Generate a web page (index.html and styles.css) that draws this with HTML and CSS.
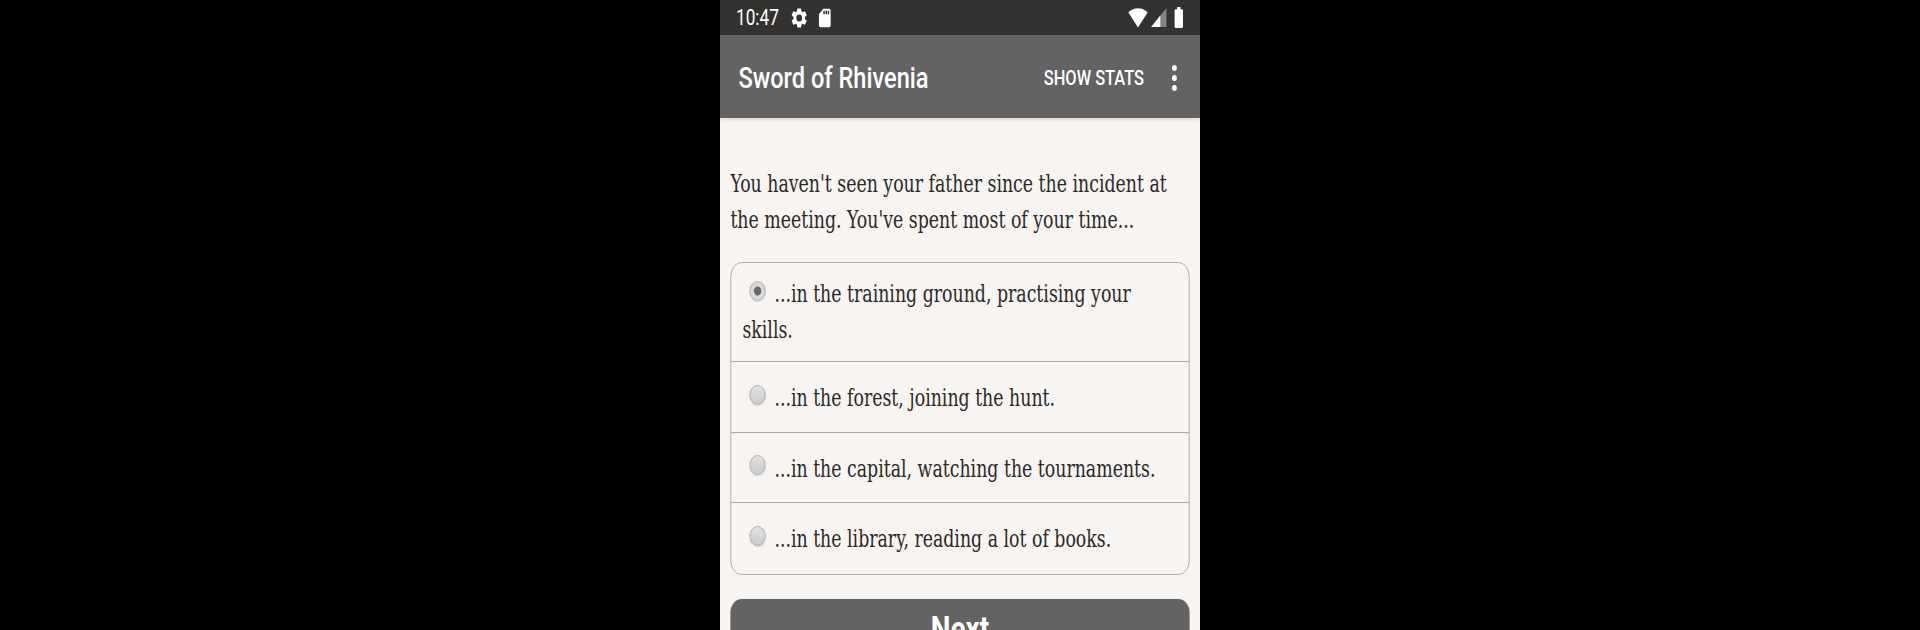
FILE: index.html
```html
<!DOCTYPE html>
<html lang="en">
<head>
  <meta charset="UTF-8">
  <title>Sword of Rhivenia</title>
  <link rel="stylesheet" href="styles.css">
</head>
<body>
  <div class="phone">
    <div class="status-bar">
      <span class="status-time">10:47</span>
      <svg class="status-icon gear" viewBox="0 0 24 24"><path d="M19.14 12.94c.04-.3.06-.61.06-.94s-.02-.64-.07-.94l2.03-1.58a.49.49 0 0 0 .12-.61l-1.92-3.32a.49.49 0 0 0-.59-.22l-2.39.96a7 7 0 0 0-1.62-.94l-.36-2.54a.48.48 0 0 0-.48-.41h-3.84a.47.47 0 0 0-.47.41l-.36 2.54c-.59.24-1.13.57-1.62.94l-2.39-.96a.48.48 0 0 0-.59.22L2.74 8.87a.48.48 0 0 0 .12.61l2.03 1.58c-.05.3-.09.63-.09.94s.02.64.07.94l-2.03 1.58a.49.49 0 0 0-.12.61l1.92 3.32c.12.22.37.29.59.22l2.39-.96c.5.38 1.03.7 1.62.94l.36 2.54c.05.24.24.41.48.41h3.84c.24 0 .44-.17.47-.41l.36-2.54a7 7 0 0 0 1.62-.94l2.39.96c.22.08.47 0 .59-.22l1.92-3.32a.48.48 0 0 0-.12-.61l-2.01-1.58zM12 15.6a3.6 3.6 0 1 1 0-7.2 3.6 3.6 0 0 1 0 7.2z"/></svg>
      <svg class="status-icon sd" viewBox="0 0 24 24"><path d="M18 2h-8L4.02 8 4 20c0 1.1.9 2 2 2h12c1.1 0 2-.9 2-2V4c0-1.1-.9-2-2-2zm-6 6h-2V4h2v4zm3 0h-2V4h2v4zm3 0h-2V4h2v4z"/></svg>
      <span class="status-spacer"></span>
      <svg class="status-icon wifi" viewBox="0 0 24 24"><path d="M12.01 21.49L23.64 7c-.45-.34-4.93-4-11.64-4C5.28 3 .81 6.66.36 7l11.64 14.5.01-.01z"/></svg>
      <svg class="status-icon signal" viewBox="0 0 24 24"><path d="M2 22h20V2z" opacity=".4"/><path d="M14 10L2 22h12z"/></svg>
      <svg class="status-icon battery" viewBox="0 0 24 24"><path d="M15.67 4H14V2h-4v2H8.33C7.6 4 7 4.6 7 5.33v15.33C7 21.4 7.6 22 8.33 22h7.33c.74 0 1.34-.6 1.34-1.33V5.33C17 4.6 16.4 4 15.67 4z"/></svg>
    </div>

    <div class="app-bar">
      <span class="app-title">Sword of Rhivenia</span>
      <span class="app-action">SHOW STATS</span>
      <span class="app-menu"><i></i><i></i><i></i></span>
    </div>

    <div class="content">
      <p class="question">You haven't seen your father since the incident at the meeting. You've spent most of your time...</p>

      <div class="choices">
        <div class="choice first"><span class="radio checked"></span>...in the training ground, practising your skills.</div>
        <div class="choice"><span class="radio"></span>...in the forest, joining the hunt.</div>
        <div class="choice"><span class="radio"></span>...in the capital, watching the tournaments.</div>
        <div class="choice"><span class="radio"></span>...in the library, reading a lot of books.</div>
      </div>

      <button class="next-btn">Next</button>
    </div>
  </div>
</body>
</html>
```

FILE: styles.css
```css
:root {
  --bar-dark: #333230;
  --bar: #636363;
  --page: #f7f4f1;
  --text: #2b2a28;
  --line: #aaa9a7;
}
html, body {
  margin: 0;
  padding: 0;
  height: 100%;
  background: #000;
  overflow: hidden;
}
body {
  display: flex;
  justify-content: center;
}
/* the capture is squeezed sideways, so the whole screen is laid out at 600 and narrowed to 480 */
.phone {
  width: 600px;
  height: 630px;
  flex: none;
  overflow: hidden;
  background: var(--page);
  transform: scaleX(0.8);
}
.status-bar {
  height: 35px;
  box-sizing: border-box;
  padding: 0 14px 0 20px;
  display: flex;
  align-items: center;
  background: var(--bar-dark);
  color: #fff;
}
.status-time {
  font-family: Roboto, sans-serif;
  font-size: 21.5px;
  width: 67px;
}
.status-icon {
  width: 24px;
  height: 24px;
  fill: #fff;
  flex: none;
}
.status-icon.sd {
  margin-left: 9px;
  width: 22px;
  height: 22px;
}
.status-spacer {
  flex: 1;
}
.status-icon.wifi {
  width: 25px;
  height: 25px;
}
.status-icon.signal {
  margin-left: 2px;
  width: 23px;
  height: 23px;
}
.status-icon.battery {
  margin-left: 1px;
  width: 25px;
  height: 25px;
}
.app-bar {
  height: 83px;
  box-sizing: border-box;
  padding: 2px 25px 0 23px;
  display: flex;
  align-items: center;
  background: var(--bar);
  box-shadow: 0 2px 4px rgba(0,0,0,0.1);
  color: #fff;
  position: relative;
}
.app-title {
  font-family: Roboto, sans-serif;
  font-size: 29.5px;
  font-weight: 500;
  flex: 1;
}
.app-action {
  font-family: Roboto, sans-serif;
  font-size: 20.5px;
  font-weight: 500;
}
.app-menu {
  margin-left: 31px;
  width: 14px;
  display: flex;
  flex-direction: column;
  align-items: center;
  gap: 4px;
}
.app-menu i {
  width: 6px;
  height: 6px;
  border-radius: 50%;
  background: #fff;
}
.content {
  padding: 49px 13px 0;
  font-family: "DejaVu Serif Condensed", "DejaVu Serif", serif;
  font-stretch: condensed;
  font-size: 24.1px;
  line-height: 35.5px;
  color: var(--text);
}
.question {
  margin: 0 0 24px;
}
.choices {
  border: 1.5px solid var(--line);
  border-radius: 14px;
}
.choice {
  padding: 19px 14px 15px;
  height: 35.5px;
  border-top: 1.5px solid var(--line);
}
.choice:last-child {
  padding-bottom: 16.5px;
}
.choice.first {
  padding: 14px 14px 13px;
  height: auto;
  border-top: none;
}
.radio {
  display: inline-block;
  width: 20px;
  height: 20px;
  box-sizing: border-box;
  margin: 0 11px 0 9px;
  vertical-align: 1.5px;
  border-radius: 50%;
  border: 1px solid #a8a8a8;
  background: linear-gradient(#e2e2e2, #cbcbcb);
  box-shadow: 0 1px 2px rgba(0,0,0,0.15);
}
.radio.checked {
  background: radial-gradient(circle, #666 0 4px, #d8d8d8 5px);
}
.next-btn {
  display: block;
  width: 100%;
  margin-top: 24px;
  padding: 10px 0;
  border: none;
  border-radius: 14px;
  background: var(--bar);
  color: #fff;
  font-family: Roboto, sans-serif;
  font-size: 35px;
  font-weight: 700;
}
```
